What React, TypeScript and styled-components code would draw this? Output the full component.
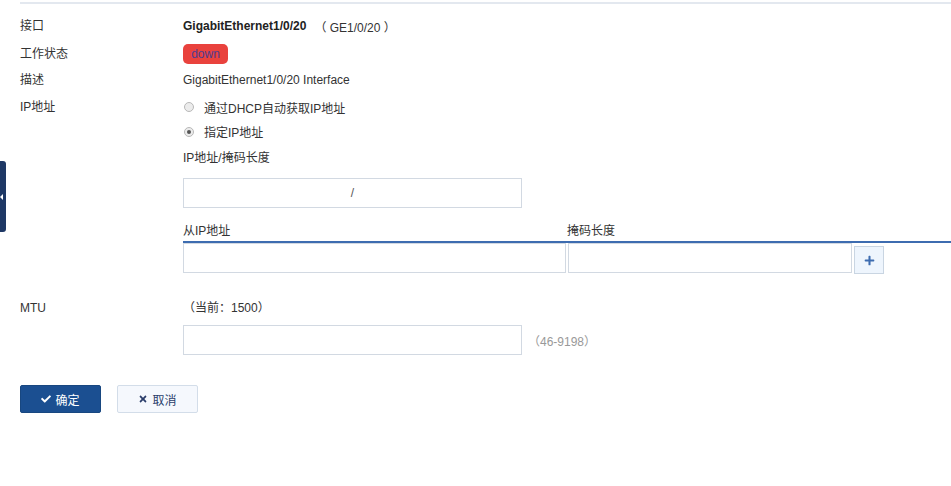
import React from "react";
import styled, { createGlobalStyle } from "styled-components";
import { FaCheck, FaTimes, FaPlus } from "react-icons/fa";

const Global = createGlobalStyle`
  html, body { margin: 0; padding: 0; background: #fff; }
  body {
    font-family: "Liberation Sans", Arial, "Noto Sans CJK SC", sans-serif;
    font-size: 12px;
    color: #333;
  }
  * { box-sizing: border-box; }
`;

const Page = styled.div`
  position: relative;
  width: 951px;
  height: 486px;
  overflow: hidden;
  padding-top: 2px;
`;

const TopLine = styled.div`
  margin-left: 20px;
  height: 2px;
  background: #e3e8ef;
`;

const Form = styled.div`
  padding-left: 20px;
  padding-top: 9px;
`;

const Row = styled.div<{ $mt?: number }>`
  display: grid;
  grid-template-columns: 163px 1fr;
  margin-top: ${(p) => p.$mt ?? 0}px;
`;

const Label = styled.div<{ $h?: number }>`
  height: ${(p) => p.$h ?? 26}px;
  line-height: ${(p) => p.$h ?? 26}px;
  white-space: nowrap;
`;

const Value = styled.div`
  display: flex;
  flex-direction: column;
  min-width: 0;
`;

const Line = styled.div<{ $h?: number; $mt?: number }>`
  height: ${(p) => p.$h ?? 26}px;
  margin-top: ${(p) => p.$mt ?? 0}px;
  display: flex;
  align-items: center;
  white-space: nowrap;
`;

const Strong = styled.span`
  font-weight: bold;
  color: #222;
`;

const Paren = styled.span<{ $muted?: boolean }>`
  margin-left: ${(p) => (p.$muted ? 6 : 8)}px;
  color: ${(p) => (p.$muted ? "#999" : "#333")};
`;

const Badge = styled.span`
  display: inline-flex;
  align-items: center;
  justify-content: center;
  width: 45px;
  height: 20px;
  border-radius: 5px;
  background: #e9423d;
  color: #4e3d92;
  font-size: 12px;
`;

const Radio = styled.span<{ $checked?: boolean }>`
  width: 10px;
  height: 10px;
  border-radius: 50%;
  border: 1px solid #b8b8b8;
  background: #ececec;
  margin-left: 1px;
  margin-right: 10px;
  display: inline-flex;
  align-items: center;
  justify-content: center;
  &::after {
    content: "";
    display: ${(p) => (p.$checked ? "block" : "none")};
    width: 4px;
    height: 4px;
    border-radius: 50%;
    background: #555;
  }
`;

const TextInput = styled.div<{ $w: number; $mt?: number }>`
  width: ${(p) => p.$w}px;
  height: 30px;
  margin-top: ${(p) => p.$mt ?? 0}px;
  border: 1px solid #d2d9e2;
  background: #fff;
  display: flex;
  align-items: center;
  justify-content: center;
  color: #555;
  flex-shrink: 0;
`;

const InputWithHint = styled.div`
  display: flex;
  align-items: center;
  margin-top: 8px;
`;

const Table = styled.div`
  display: flex;
  flex-direction: column;
  margin-top: 9px;
`;

const TableHead = styled.div`
  display: flex;
  height: 26px;
  align-items: center;
  border-bottom: 2px solid #3d6cb0;
`;

const HeadCell = styled.div<{ $w: number }>`
  width: ${(p) => p.$w}px;
  flex-shrink: 0;
`;

const TableBody = styled.div`
  display: flex;
  align-items: flex-start;
  gap: 2px;
`;

const PlusButton = styled.div`
  width: 30px;
  height: 28px;
  margin-top: 3px;
  border: 1px solid #c9d5e2;
  background: #eef5fd;
  display: flex;
  align-items: center;
  justify-content: center;
  color: #3d6cb0;
  font-size: 11px;
`;

const Buttons = styled.div`
  display: flex;
  gap: 16px;
  margin-top: 30px;
`;

const Button = styled.div<{ $primary?: boolean }>`
  width: 81px;
  height: 28px;
  border-radius: 2px;
  display: flex;
  align-items: center;
  justify-content: center;
  gap: 4px;
  font-size: 12px;
  background: ${(p) => (p.$primary ? "#1b4f91" : "#f5f8fd")};
  border: 1px solid ${(p) => (p.$primary ? "#184780" : "#d3dde9")};
  color: ${(p) => (p.$primary ? "#fff" : "#2a3d6a")};
  svg { font-size: 10px; }
`;

const SideHandle = styled.div`
  position: absolute;
  left: 0;
  top: 161px;
  width: 6px;
  height: 71px;
  background: #1e3865;
  border-radius: 0 3px 3px 0;
  &::after {
    content: "";
    position: absolute;
    left: 0;
    top: 33px;
    width: 0;
    height: 0;
    border-top: 3px solid transparent;
    border-bottom: 3px solid transparent;
    border-right: 3px solid #fff;
  }
`;

export default function App() {
  return (
    <>
      <Global />
      <Page>
        <TopLine />
        <Form>
          <Row>
            <Label>接口</Label>
            <Value>
              <Line>
                <Strong>GigabitEthernet1/0/20</Strong>
                <Paren>（ GE1/0/20 ）</Paren>
              </Line>
            </Value>
          </Row>
          <Row $mt={2}>
            <Label>工作状态</Label>
            <Value>
              <Line>
                <Badge>down</Badge>
              </Line>
            </Value>
          </Row>
          <Row>
            <Label>描述</Label>
            <Value>
              <Line>GigabitEthernet1/0/20 Interface</Line>
            </Value>
          </Row>
          <Row $mt={1}>
            <Label>IP地址</Label>
            <Value>
              <Line>
                <Radio />
                通过DHCP自动获取IP地址
              </Line>
              <Line $h={23}>
                <Radio $checked />
                指定IP地址
              </Line>
              <Line>IP地址/掩码长度</Line>
              <TextInput $w={339} $mt={9}>/</TextInput>
              <Table>
                <TableHead>
                  <HeadCell $w={384}>从IP地址</HeadCell>
                  <HeadCell $w={200}>掩码长度</HeadCell>
                </TableHead>
                <TableBody>
                  <TextInput $w={383} />
                  <TextInput $w={284} />
                  <PlusButton>
                    <FaPlus />
                  </PlusButton>
                </TableBody>
              </Table>
            </Value>
          </Row>
          <Row $mt={21}>
            <Label>MTU</Label>
            <Value>
              <Line $h={22}>（当前：1500）</Line>
              <InputWithHint>
                <TextInput $w={339} />
                <Paren $muted>（46-9198）</Paren>
              </InputWithHint>
            </Value>
          </Row>
          <Buttons>
            <Button $primary>
              <FaCheck />
              确定
            </Button>
            <Button>
              <FaTimes />
              取消
            </Button>
          </Buttons>
        </Form>
        <SideHandle />
      </Page>
    </>
  );
}
